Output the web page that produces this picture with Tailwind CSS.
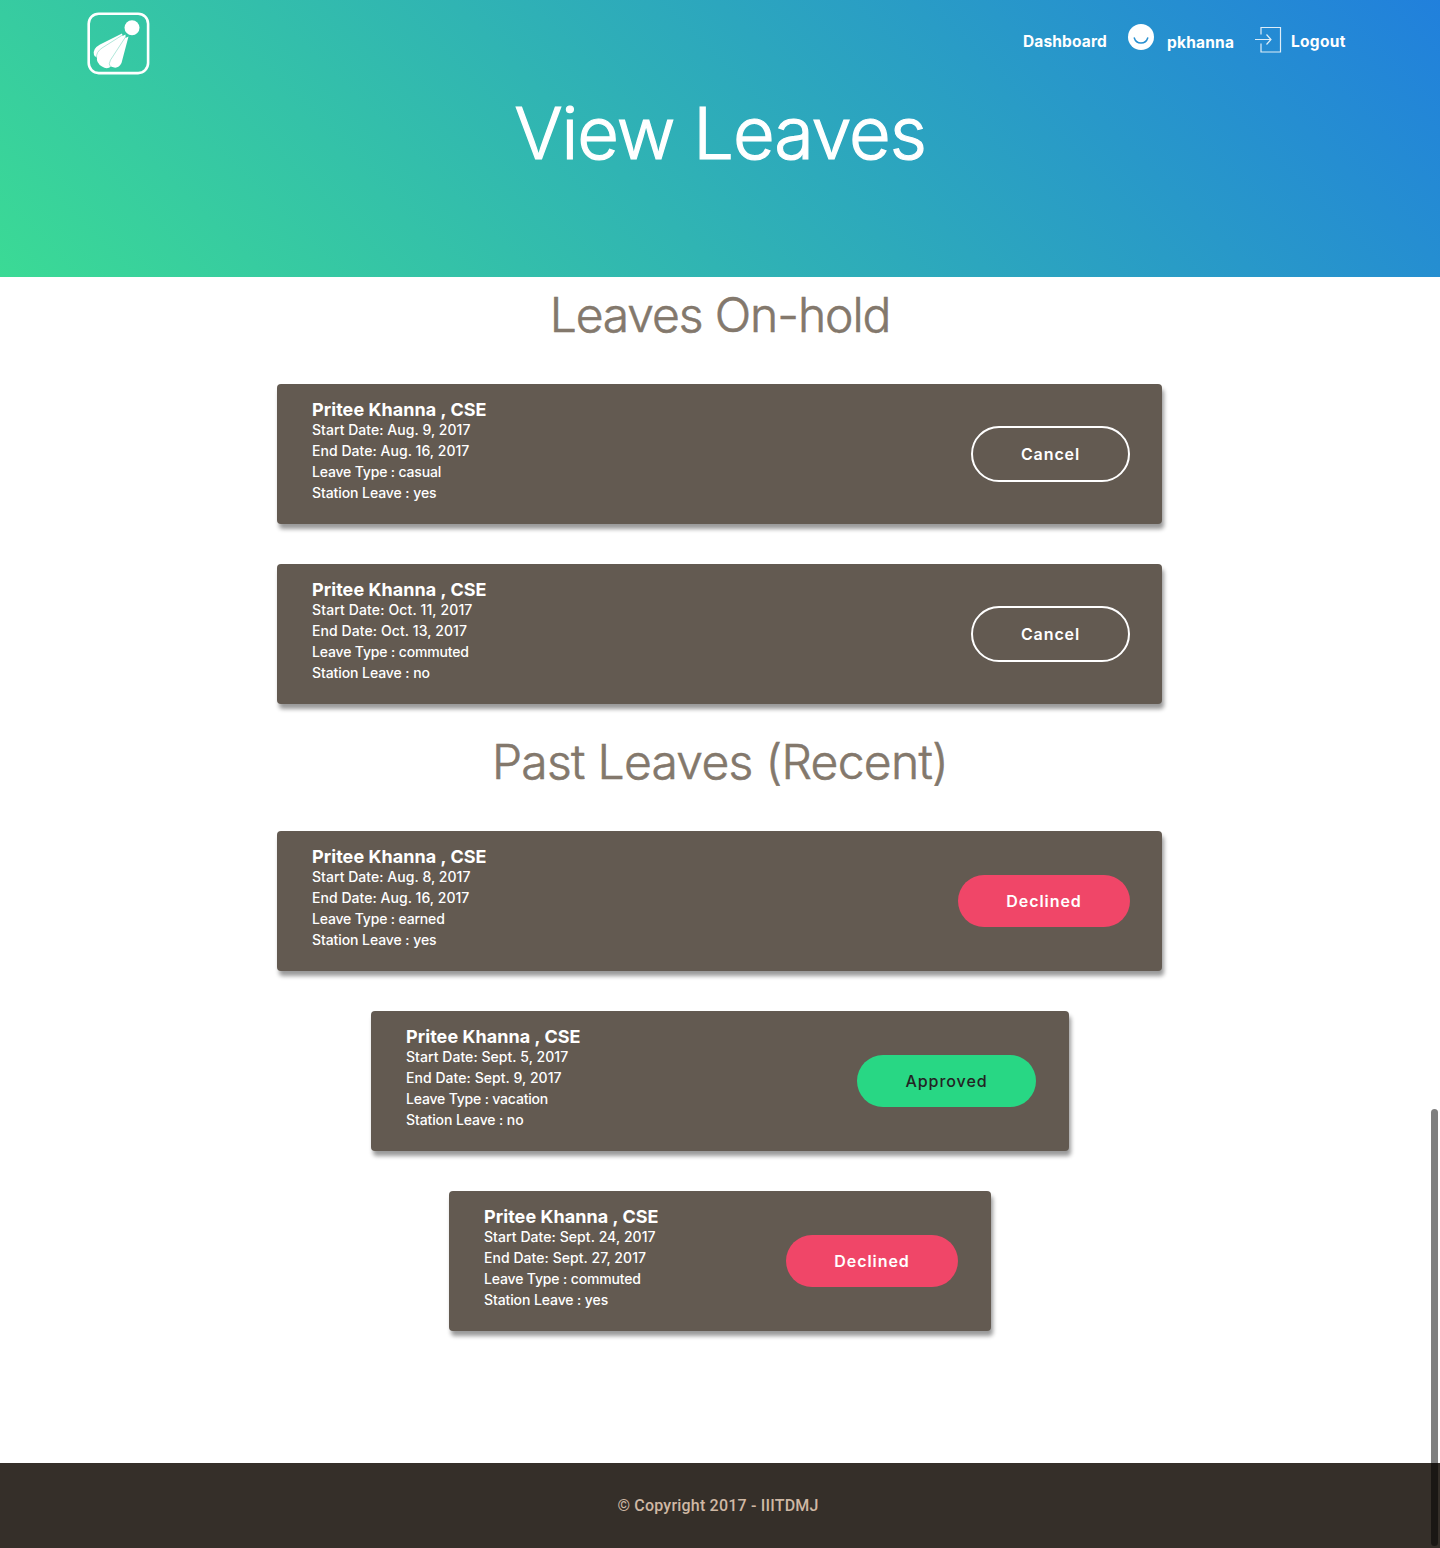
<!DOCTYPE html>
<html lang="en">
<head>
<meta charset="utf-8">
<title>View Leaves</title>
<script src="https://cdn.jsdelivr.net/npm/@tailwindcss/browser@4"></script>
</head>
<body class="relative flex min-h-[1548px] flex-col bg-white font-['Inter',sans-serif]">
<header class="flex h-[277px] flex-col bg-[linear-gradient(45deg,#3bda95,#2180dc)] text-white">
  <nav class="flex h-[86px] shrink-0 items-start pt-3 pr-[94px] pl-[87px] text-[15.5px] leading-6 font-bold">
    <svg class="size-[63px]" viewBox="0 0 63 63">
      <rect x="1.700" y="1.700" width="59.400" height="59.400" rx="10" fill="none" stroke="#fff" stroke-width="2.600"/>
      <circle cx="45" cy="15.700" r="7.500" fill="#fff"/>
      <path d="M35 21.500 L13 32.500 Q5 37 7 43 Q7.500 45 10 45 Q9 51 15 54.500 Q20 58 24 54.500 Q31 58 34.500 51 L41.500 24.500 L38.500 26 L38.500 22.500 L35.500 24 Z" fill="#fff"/>
      <path d="M35.500 23 L15 36 Q9 40 9.500 46 M38.500 25 L23.500 48 Q21 52 23.500 55" fill="none" stroke="#8fdcca" stroke-width=".7"/>
    </svg>
    <div class="ml-auto flex">
      <a class="mt-[18px] w-[105px] tracking-[0.15px]">Dashboard</a>
      <svg class="mt-3 size-[26px]" viewBox="0 0 26 26"><circle cx="13" cy="13" r="13" fill="#fff"/><path d="M6.300 14 A7 7 0 0 0 19.700 14" fill="none" stroke="#278fd0" stroke-width="1.500" stroke-linecap="round"/></svg>
      <a class="mt-[19px] ml-[13px] w-[88px] tracking-[0.2px]">pkhanna</a>
      <svg class="mt-[14px] size-[27px]" viewBox="0 0 27 27" fill="none" stroke="#fff" stroke-width="1.200" opacity=".85"><path d="M6 8.500V1.500H25.500V26H6V17.500M0 13.500H15.500M11.500 8.500L16 13.500L11.500 18.500"/></svg>
      <a class="mt-[18px] ml-2 w-[56px] pl-px tracking-[0.3px]">Logout</a>
    </div>
  </nav>
  <h1 class="mt-[2px] text-center text-[72px] leading-[90px] font-light tracking-[-1.1px] [-webkit-text-stroke:1.2px_#fff]">View Leaves</h1>
</header>
<main class="flex w-full flex-1 flex-col items-center">
  <h2 class="mt-[9px] h-[58px] text-5xl leading-[58px] font-light tracking-[-1.1px] text-[#83786c] [-webkit-text-stroke:0.6px_#83786c]">Leaves On-hold</h2>
  <div class="mt-10 flex flex-col items-center gap-10 pr-px text-white">
    <article class="flex h-[140px] w-[885px] items-center justify-between rounded-[4px] bg-[#635a51] pr-8 pl-[35px] shadow-[2px_5px_4px_rgba(0,0,0,0.4)]">
      <div class="-mt-1 text-sm leading-[21px] font-medium"><h3 class="text-lg leading-[18px] font-bold tracking-[0.05px]">Pritee Khanna , CSE</h3><p class="tracking-[0.04px]">Start Date: Aug. 9, 2017</p><p class="tracking-[0.04px]">End Date: Aug. 16, 2017</p><p class="tracking-[-0.17px]">Leave Type : casual</p><p class="tracking-[-0.08px]">Station Leave : yes</p></div>
      <button class="h-14 w-[159px] rounded-full border-2 border-white text-base font-semibold tracking-[0.900px]">Cancel</button>
    </article>
    <article class="flex h-[140px] w-[885px] items-center justify-between rounded-[4px] bg-[#635a51] pr-8 pl-[35px] shadow-[2px_5px_4px_rgba(0,0,0,0.4)]">
      <div class="-mt-1 text-sm leading-[21px] font-medium"><h3 class="text-lg leading-[18px] font-bold tracking-[0.05px]">Pritee Khanna , CSE</h3><p class="tracking-[0.13px]">Start Date: Oct. 11, 2017</p><p class="tracking-[0.08px]">End Date: Oct. 13, 2017</p><p class="tracking-[-0.15px]">Leave Type : commuted</p><p class="tracking-[-0.08px]">Station Leave : no</p></div>
      <button class="h-14 w-[159px] rounded-full border-2 border-white text-base font-semibold tracking-[0.900px]">Cancel</button>
    </article>
  </div>
  <h2 class="mt-[29px] h-[58px] text-5xl leading-[58px] font-light tracking-[-0.7px] text-[#83786c] [-webkit-text-stroke:0.6px_#83786c]">Past Leaves (Recent)</h2>
  <div class="mt-10 flex flex-col items-center gap-10 text-white">
    <article class="mr-px flex h-[140px] w-[885px] items-center justify-between rounded-[4px] bg-[#635a51] pr-8 pl-[35px] shadow-[2px_5px_4px_rgba(0,0,0,0.4)]">
      <div class="-mt-1 text-sm leading-[21px] font-medium"><h3 class="text-lg leading-[18px] font-bold tracking-[0.05px]">Pritee Khanna , CSE</h3><p class="tracking-[0.04px]">Start Date: Aug. 8, 2017</p><p class="tracking-[0.04px]">End Date: Aug. 16, 2017</p><p class="tracking-[-0.17px]">Leave Type : earned</p><p class="tracking-[-0.08px]">Station Leave : yes</p></div>
      <button class="h-[52px] w-[172px] rounded-full bg-[#f04668] text-base font-semibold tracking-[0.95px]">Declined</button>
    </article>
    <article class="flex h-[140px] w-[698px] items-center justify-between rounded-[4px] bg-[#635a51] pr-[33px] pl-[35px] shadow-[2px_5px_4px_rgba(0,0,0,0.4)]">
      <div class="-mt-1 text-sm leading-[21px] font-medium"><h3 class="text-lg leading-[18px] font-bold tracking-[0.05px]">Pritee Khanna , CSE</h3><p class="tracking-[0.05px]">Start Date: Sept. 5, 2017</p><p class="tracking-[0.05px]">End Date: Sept. 9, 2017</p><p class="tracking-[-0.18px]">Leave Type : vacation</p><p class="tracking-[-0.1px]">Station Leave : no</p></div>
      <button class="h-[52px] w-[179px] rounded-full bg-[#28d784] text-base font-medium tracking-[0.95px] text-[#232323]">Approved</button>
    </article>
    <article class="flex h-[140px] w-[542px] items-center justify-between rounded-[4px] bg-[#635a51] pr-[33px] pl-[35px] shadow-[2px_5px_4px_rgba(0,0,0,0.4)]">
      <div class="-mt-1 text-sm leading-[21px] font-medium"><h3 class="text-lg leading-[18px] font-bold tracking-[0.05px]">Pritee Khanna , CSE</h3><p class="tracking-[0.07px]">Start Date: Sept. 24, 2017</p><p class="tracking-[0.05px]">End Date: Sept. 27, 2017</p><p class="tracking-[-0.15px]">Leave Type : commuted</p><p class="tracking-[-0.1px]">Station Leave : yes</p></div>
      <button class="h-[52px] w-[172px] rounded-full bg-[#f04668] text-base font-semibold tracking-[0.95px]">Declined</button>
    </article>
  </div>
</main>
<footer class="flex h-[85px] items-center justify-center bg-[#352f29] pr-1 font-['Roboto',sans-serif] text-base font-medium tracking-[0.2px] text-[#cfb8a4]">© Copyright 2017 - IIITDMJ</footer>
<div class="absolute top-[1109px] right-[2px] h-[437px] w-[7px] rounded-full bg-black/50"></div>
</body>
</html>
